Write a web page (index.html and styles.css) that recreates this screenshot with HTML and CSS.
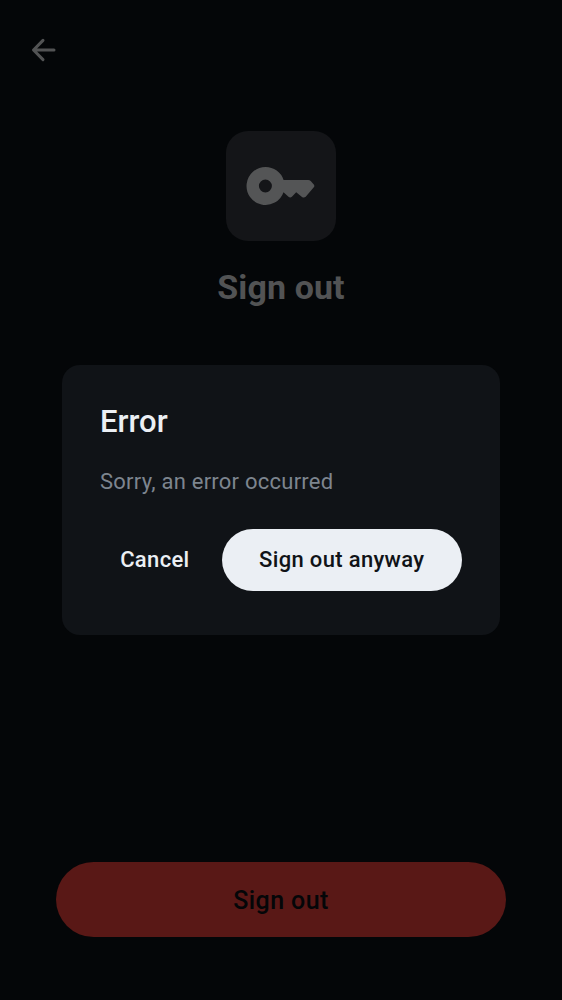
FILE: index.html
```html
<!DOCTYPE html>
<html lang="en">
<head>
<meta charset="utf-8">
<title>Sign out</title>
<link rel="stylesheet" href="styles.css">
</head>
<body>
<div class="stage">
  <main class="screen">
    <header class="topbar">
      <svg class="back" viewBox="0 0 24 22" aria-label="Back"><path d="M22 11H2M11 1.400L1.500 11L11 20.600"/></svg>
    </header>
    <section class="hero">
      <div class="tile">
        <svg class="key" viewBox="0 0 68 38" aria-hidden="true"><path fill-rule="evenodd" d="M18.600 0A19 19 0 1 0 36.500 25.200L41.500 29.800Q43.200 31.200 44.900 29.800L49.200 25.200L55 29.900Q57 31.100 58.700 29.700L66.800 20.300Q67.900 18.900 66.800 17.500L63.700 14Q62.700 12.900 61.200 12.900H36.600A19 19 0 0 0 18.600 0ZM18.400 12.500A6.500 6.500 0 1 1 18.400 25.500A6.500 6.500 0 0 1 18.400 12.500Z"/></svg>
      </div>
      <h1 class="title">Sign out</h1>
    </section>
    <button class="danger">Sign out</button>
  </main>
  <div class="overlay">
    <div class="dialog" role="dialog">
      <h2 class="dialog-title">Error</h2>
      <p class="dialog-text">Sorry, an error occurred</p>
      <div class="actions">
        <button class="btn btn-text">Cancel</button>
        <button class="btn btn-fill">Sign out anyway</button>
      </div>
    </div>
  </div>
</div>
</body>
</html>
```
FILE: styles.css
```css
* { box-sizing: border-box; }
body { margin: 0; font-family: Roboto, sans-serif; background: #040608; }
button { border: 0; font-family: inherit; padding: 0; }
.stage { position: relative; width: 562px; height: 1000px; }
.screen { height: 100%; display: flex; flex-direction: column; padding: 39px 56px 63px; }
.topbar { height: 92px; margin-left: -24px; }
.back { display: block; width: 24px; height: 22px; fill: none; stroke: #525354; stroke-width: 3; stroke-linecap: round; stroke-linejoin: round; overflow: visible; }
.hero { display: flex; flex-direction: column; align-items: center; }
.tile { width: 110px; height: 110px; border-radius: 22px; background: #141518; display: flex; align-items: center; justify-content: center; }
.key { width: 68px; height: 38px; fill: #545556; overflow: visible; }
.title { margin: 26px 0 0; font-size: 34px; line-height: 41px; font-weight: 700; letter-spacing: .1px; color: #525354; }
.danger { margin-top: auto; height: 75px; border-radius: 38px; background: #591816; color: #040608; font-size: 25px; font-weight: 500; letter-spacing: .4px; padding-top: 2px; }
.overlay { position: absolute; inset: 0; display: flex; align-items: center; justify-content: center; }
.dialog { width: 438px; height: 270px; border-radius: 18px; background: #101317; padding: 38px 38px 0; }
.dialog-title { margin: 0; font-size: 31px; line-height: 38px; font-weight: 500; color: #ebeff4; }
.dialog-text { margin: 26px 0 0; font-size: 22px; line-height: 30px; letter-spacing: .24px; color: #7d858f; }
.actions { display: flex; justify-content: flex-end; gap: 12px; margin-top: 32px; }
.btn { height: 62px; border-radius: 31px; font-size: 22px; font-weight: 500; letter-spacing: .33px; padding-bottom: 2px; }
.btn-text { background: none; color: #ebeff4; padding: 0 20px 2px; }
.btn-fill { background: #ebeff4; color: #101317; width: 240.500px; }
```
